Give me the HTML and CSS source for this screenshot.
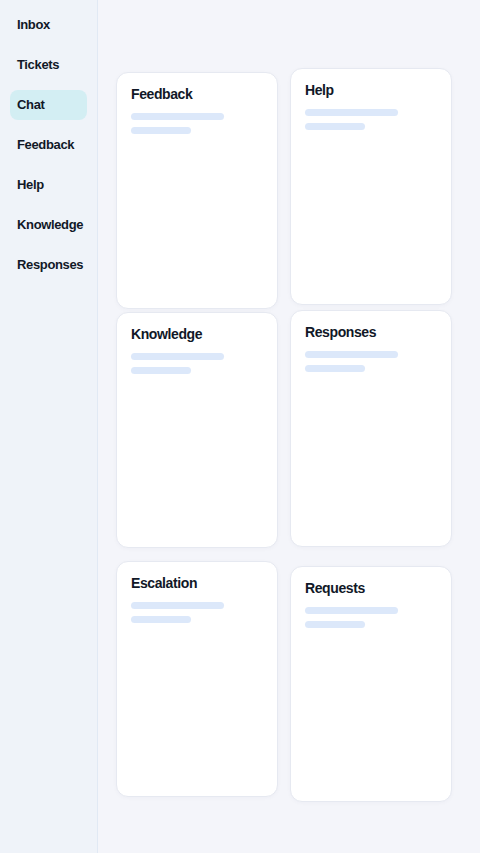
FILE: index.html
```html
<!DOCTYPE html>
<html lang="en">
<head>
<meta charset="utf-8">
<title>Support</title>
<link rel="stylesheet" href="styles.css">
</head>
<body>
<div class="app">
  <nav class="sidebar">
    <div class="nav-item">Inbox</div>
    <div class="nav-item">Tickets</div>
    <div class="nav-item active">Chat</div>
    <div class="nav-item">Feedback</div>
    <div class="nav-item">Help</div>
    <div class="nav-item">Knowledge</div>
    <div class="nav-item">Responses</div>
  </nav>
  <main class="main">
    <div class="column col-left">
      <section class="card"><h2 class="card-title">Feedback</h2><div class="bar bar-long"></div><div class="bar bar-short"></div></section>
      <section class="card card-l2"><h2 class="card-title">Knowledge</h2><div class="bar bar-long"></div><div class="bar bar-short"></div></section>
      <section class="card card-l3"><h2 class="card-title">Escalation</h2><div class="bar bar-long"></div><div class="bar bar-short"></div></section>
    </div>
    <div class="column col-right">
      <section class="card"><h2 class="card-title">Help</h2><div class="bar bar-long"></div><div class="bar bar-short"></div></section>
      <section class="card card-r2"><h2 class="card-title">Responses</h2><div class="bar bar-long"></div><div class="bar bar-short"></div></section>
      <section class="card card-r3"><h2 class="card-title">Requests</h2><div class="bar bar-long"></div><div class="bar bar-short"></div></section>
    </div>
  </main>
</div>
</body>
</html>
```
FILE: styles.css
```css
* { box-sizing: border-box; }
html, body { margin: 0; padding: 0; }
body {
  font-family: "Liberation Sans", Arial, sans-serif;
  color: #111827;
  background: #f4f5fa;
}
.app {
  display: flex;
  width: 480px;
  height: 853px;
  overflow: hidden;
}
.sidebar {
  width: 98px;
  flex: none;
  background: #eff3f9;
  border-right: 1px solid #e1e9f4;
  padding: 10px 10px 0 10px;
  display: flex;
  flex-direction: column;
  gap: 10px;
}
.nav-item {
  height: 30px;
  width: 77px;
  padding-left: 7px;
  padding-bottom: 2px;
  display: flex;
  align-items: center;
  font-size: 13px;
  letter-spacing: -0.35px;
  font-weight: 700;
  color: #111827;
  border-radius: 8px;
  white-space: nowrap;
}
.nav-item.active {
  background: #d3eef3;
}
.main {
  flex: 1;
  display: flex;
  gap: 12px;
  padding-left: 18px;
}
.column {
  width: 162px;
  display: flex;
  flex-direction: column;
}
.col-left { padding-top: 72px; }
.col-right { padding-top: 68px; }
.card {
  height: 237px;
  background: #ffffff;
  border: 1px solid #e6e9f1;
  border-radius: 12px;
  padding: 14px 14px;
  box-shadow: 0 1px 4px rgba(30, 40, 90, 0.03);
}
.card-l2 { margin-top: 3px; height: 236px; }
.card-l3 { margin-top: 13px; height: 236px; }
.card-r2 { margin-top: 5px; }
.card-r3 { margin-top: 19px; height: 236px; }
.card-title {
  margin: 0 0 12px 0;
  font-size: 14px;
  line-height: 14px;
  letter-spacing: -0.4px;
  font-weight: 700;
  color: #111827;
}
.bar {
  height: 7px;
  border-radius: 4px;
  background: #dce8fa;
}
.bar-long { width: 93px; }
.bar-short { width: 60px; margin-top: 7px; }
```
